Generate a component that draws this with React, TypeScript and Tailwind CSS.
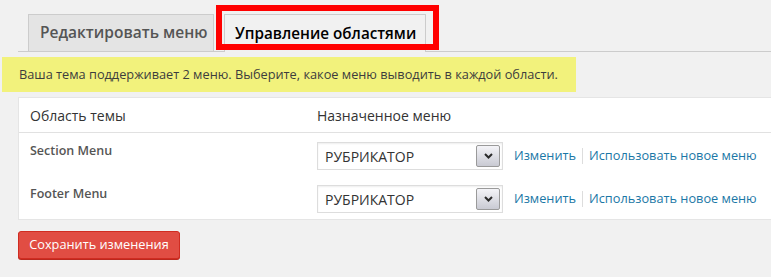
import React from 'react';

const rows = ['Section Menu', 'Footer Menu'];

const MenuSelect = () => (
  <div className="flex items-center h-[28px] w-[186px] border border-[#dddddd] bg-white pl-[7px] pr-[2px] shadow-[inset_0_1px_2px_rgba(0,0,0,0.07)]">
    <span className="flex-1 text-[14px] text-[#333]">РУБРИКАТОР</span>
    <span className="flex items-center justify-center w-[24px] h-[22px] border border-[#9a9a9a] rounded-[2px] bg-gradient-to-b from-[#f4f4f8] to-[#c9cad3]">
      <svg width="9" height="6" viewBox="0 0 9 6">
        <path d="M1 1 L4.5 4.5 L8 1" fill="none" stroke="#2b2b2b" strokeWidth="2" />
      </svg>
    </span>
  </div>
);

export default function App() {
  return (
    <div className="w-[771px] h-[277px] overflow-hidden bg-[#f1f1f1] font-['Open_Sans',sans-serif] text-[#444]">
      {/* Tabs */}
      <div className="relative h-[52px] pt-[14px] pl-[18px]">
        <div className="flex h-[38px] border-b border-[#cccccc] pl-[10px] gap-[10px]">
          <div className="flex shrink-0 items-center whitespace-nowrap h-[38px] w-[186px] pl-[11px] border border-[#cccccc] bg-[#e4e4e4] text-[15.5px] font-semibold text-[#555]">
            Редактировать меню
          </div>
          <div className="flex shrink-0 items-center whitespace-nowrap h-[38px] w-[202px] pl-[10px] border border-b-0 border-[#cccccc] bg-[#f1f1f1] text-[15.25px] font-semibold text-black">
            Управление областями
          </div>
        </div>
        <div className="absolute left-[216px] top-[5px] w-[223px] h-[45px] border-[6px] border-[#ff0000]" />
      </div>

      {/* Notice */}
      <div className="mt-[5px] ml-[2px] w-[574px] h-[35px] flex items-center pl-[17px] bg-[#f2f27c] text-[12.75px] text-[#3d3d3d]">
        Ваша тема поддерживает 2 меню. Выберите, какое меню выводить в каждой области.
      </div>

      {/* Locations table */}
      <div className="mt-[5px] ml-[18px] h-[123px] bg-white border border-r-0 border-[#e5e5e5]">
        <div className="flex items-center h-[35px] border-b border-[#e1e1e1] text-[14px] text-[#333]">
          <div className="w-[298px] pl-[11px]">Область темы</div>
          <div>Назначенное меню</div>
        </div>
        <div className="flex flex-col gap-[15px] pt-[9px]">
          {rows.map((name) => (
            <div key={name} className="flex items-start h-[28px]">
              <div className="w-[298px] pl-[11px] text-[12.5px] font-semibold text-[#555] leading-[18px]">{name}</div>
              <MenuSelect />
              <div className="flex items-center h-[28px] ml-[11px] text-[12.75px] text-[#1a77a6]">
                <span>Изменить</span>
                <span className="mx-[6px] w-px h-[16px] bg-[#dddddd]" />
                <span>Использовать новое меню</span>
              </div>
            </div>
          ))}
        </div>
      </div>

      {/* Save */}
      <button className="mt-[11px] ml-[18px] h-[28px] w-[162px] rounded-[3px] bg-[#e14d43] border border-[#d02c21] text-white text-[12.75px] shadow-[0_1px_0_#ba281e]">
        Сохранить изменения
      </button>
    </div>
  );
}
